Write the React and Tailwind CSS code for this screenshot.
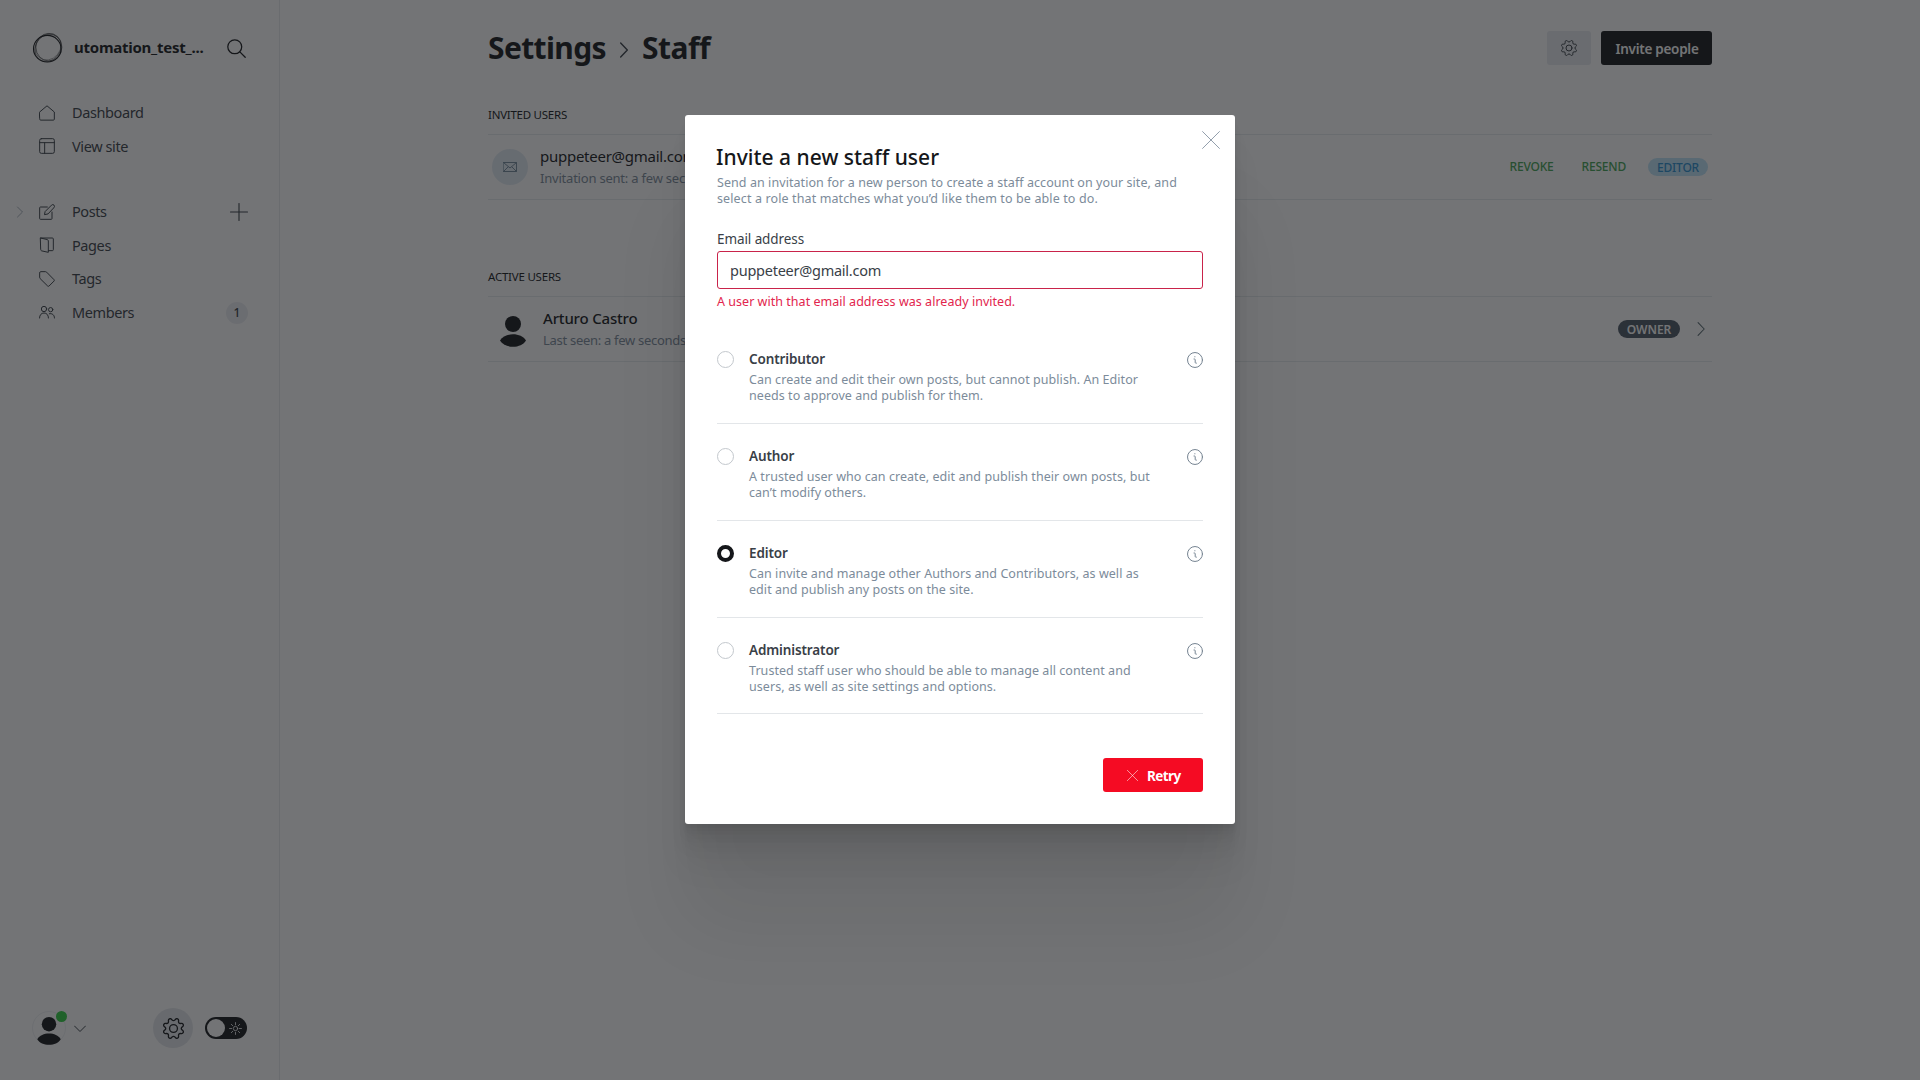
const Svg = ({ className = "", sw = 1.5, box = "0 0 24 24", children }) => (
  <svg
    viewBox={box}
    className={`shrink-0 ${className}`}
    fill="none"
    stroke="currentColor"
    strokeWidth={sw}
    strokeLinecap="round"
    strokeLinejoin="round"
  >
    {children}
  </svg>
);

const Gear = ({ className, sw }) => (
  <Svg className={className} sw={sw}>
    <path d="M10.546 2.438a1.957 1.957 0 0 0 2.908 0L14.4 1.4a1.959 1.959 0 0 1 3.41 1.413l-.071 1.4A1.958 1.958 0 0 0 19.79 6.27l1.4-.071A1.959 1.959 0 0 1 22.6 9.606l-1.04.94a1.962 1.962 0 0 0 0 2.909l1.04.944a1.958 1.958 0 0 1-1.413 3.406l-1.4-.071a1.958 1.958 0 0 0-2.056 2.056l.071 1.4A1.959 1.959 0 0 1 14.4 22.6l-.941-1.041a1.959 1.959 0 0 0-2.908 0L9.606 22.6A1.959 1.959 0 0 1 6.2 21.192l.072-1.4a1.958 1.958 0 0 0-2.057-2.056l-1.4.071A1.958 1.958 0 0 1 1.4 14.4l1.041-.944a1.962 1.962 0 0 0 0-2.909L1.4 9.606A1.959 1.959 0 0 1 2.817 6.2l1.4.071A1.958 1.958 0 0 0 6.27 4.214L6.2 2.813A1.959 1.959 0 0 1 9.606 1.4Z" />
    <circle cx="12" cy="12" r="4.5" />
  </Svg>
);

const Cross = ({ className, sw }) => (
  <Svg className={className} sw={sw}>
    <path d="M.75 23.25l22.5-22.5M23.25 23.25L.75.75" />
  </Svg>
);

const icons = {
  Dashboard: <path d="M1 10.5 12 1.2l11 9.3v10.7a1.5 1.5 0 0 1-1.5 1.5h-19A1.5 1.5 0 0 1 1 21.2z" />,
  "View site": (
    <>
      <rect x="1" y="1" width="22" height="22" rx="2.5" />
      <path d="M1 7h22M8.5 7v16" />
    </>
  ),
  Posts: (
    <>
      <path d="M12.5 4.5H2.2A1.2 1.2 0 0 0 1 5.7v16.1A1.2 1.2 0 0 0 2.2 23h16.1a1.2 1.2 0 0 0 1.2-1.2V12" />
      <path d="m13 15-4.8 1L9.2 11.3 18.8 1.7a2.6 2.6 0 0 1 3.7 3.7z" />
    </>
  ),
  Pages: (
    <>
      <path d="M2.5 1.5 12.500 3.900a2 2 0 0 1 1.500 1.900V23L4 20.800a2 2 0 0 1-1.500-1.900z" />
      <path d="M2.500 1.500H20a1.500 1.500 0 0 1 1.500 1.500v16a1.500 1.500 0 0 1-1.500 1.500h-6" />
    </>
  ),
  Tags: <path d="M1 2.500A1.500 1.500 0 0 1 2.500 1h7.200a2.500 2.500 0 0 1 1.700.7L22.500 13a1.500 1.500 0 0 1 0 2.100l-7.400 7.400a1.500 1.500 0 0 1-2.100 0L1.700 11.400A2.500 2.500 0 0 1 1 9.700z" />,
  Members: (
    <>
      <circle cx="7.500" cy="7.500" r="4" />
      <path d="M.8 21c0-4.500 2.700-7.500 6.700-7.500s6.700 3 6.700 7.500" />
      <circle cx="17.500" cy="8.500" r="3.200" />
      <path d="M15.500 14.600c4.200-1 7.700 1.600 7.700 6.400" />
    </>
  ),
};

const NavItem = ({ name, children }) => (
  <div className="flex h-[33.5px] items-center">
    <Svg className="ml-[39px] size-4 text-[#394047]">{icons[name]}</Svg>
    <span className="ml-[17px] flex-1 pt-px text-[14.5px] font-[370] tracking-[-0.4px] text-[#394047]">{name}</span>
    {children}
  </div>
);

const Person = ({ className }) => (
  <svg viewBox="0 0 26 31" className={`shrink-0 ${className}`} fill="#15171a">
    <circle cx="13" cy="8" r="8" />
    <path d="M0 24.500c2.500-4 7.500-6.200 13-6.200s10.500 2.200 13 6.200c-2.500 4-7.500 6.300-13 6.300S2.500 28.500 0 24.500z" />
  </svg>
);

const Logo = () => (
  <svg viewBox="0 0 32 32" className="ml-8 size-8 shrink-0" fill="none" stroke="#15171a">
    <ellipse cx="15.300" cy="16.700" rx="13.800" ry="13.300" strokeWidth="1.100" />
    <ellipse cx="16.900" cy="15.200" rx="13" ry="13.800" strokeWidth=".8" opacity=".65" />
    <ellipse cx="16" cy="16" rx="12.400" ry="14.400" strokeWidth=".8" opacity=".55" transform="rotate(40 16 16)" />
    <ellipse cx="17" cy="15.300" rx="14" ry="12.200" strokeWidth=".7" opacity=".5" transform="rotate(-50 16 16)" />
  </svg>
);

const Sidebar = () => (
  <aside className="flex w-[280px] shrink-0 flex-col border-r border-[#e8ebee]">
    <div className="mt-8 flex h-8 items-center">
      <Logo />
      <span className="ml-[10px] w-[153px] pb-px text-[15px] font-bold tracking-[-0.25px] text-[#15171a]">utomation_test_...</span>
      <Svg className="size-[19px] text-[#15171a]" sw={1.6}>
        <circle cx="9.800" cy="9.800" r="8.800" />
        <path d="m16.200 16.200 6.800 6.800" />
      </Svg>
    </div>
    <nav className="mt-8">
      <NavItem name="Dashboard" />
      <NavItem name="View site" />
    </nav>
    <nav className="relative mt-8">
      <Svg className="absolute top-[11px] left-[14px] size-3 text-[#8e9aa6]" sw={1.6}>
        <path d="m7 2 10 10L7 22" />
      </Svg>
      <NavItem name="Posts">
        <Svg className="mr-[31px] size-[18px] text-[#394047]" sw={1.5}>
          <path d="M12 .7v22.600M.7 12h22.600" />
        </Svg>
      </NavItem>
      <NavItem name="Pages" />
      <NavItem name="Tags" />
      <NavItem name="Members">
        <span className="mt-px mr-[31px] flex size-[22px] items-center justify-center rounded-full bg-[#eceef2] text-[12px] font-medium text-[#394047]">1</span>
      </NavItem>
    </nav>
    <div className="mt-auto mb-8 flex h-10 items-center">
      <div className="relative ml-8 flex size-[34px] items-end justify-center rounded-full border border-[#eff1f4]">
        <Person className="-mb-px h-[28px] w-[24px]" />
        <i className="absolute -top-px -right-[2px] size-[11px] rounded-full bg-[#30cf43]" />
      </div>
      <Svg className="mt-px ml-2 size-3 text-[#394047]" sw={2}>
        <path d="m1 6 11 11L23 6" />
      </Svg>
      <span className="ml-[67px] flex size-10 items-center justify-center rounded-full bg-[#e4e7eb]">
        <Gear className="size-[21px] text-[#15171a]" sw={1.5} />
      </span>
      <span className="ml-3 flex h-[22px] w-[42px] items-center rounded-full bg-[#15171a] pl-[2px]">
        <i className="size-[18px] rounded-full bg-white" />
        <Svg className="ml-[4px] size-[13px] text-white" sw={1.5}>
          <circle cx="12" cy="12" r="4" />
          <path d="M12 1v4M12 19v4M1 12h4M19 12h4M4.200 4.200 7 7M17 17l2.800 2.800M4.200 19.800 7 17M17 7l2.800-2.800" />
        </Svg>
      </span>
    </div>
  </aside>
);

const Row = ({ children }) => (
  <div className="flex h-[66px] items-center border-y border-[#e6eaed]">{children}</div>
);

const Main = () => (
  <main className="ml-[208px] w-[1224px]">
    <header className="mt-[31px] flex h-[34px] items-center text-[30px] font-bold text-[#15171a]">
      <span className="pb-[2px] leading-[31px] tracking-[-0.62px]">Settings</span>
      <Svg className="mt-[3px] ml-[10px] size-4 text-[#394047]" sw={2.1}>
        <path d="M7 1.500 17 12 7 22.500" />
      </Svg>
      <span className="ml-[10px] pb-[2px] leading-[31px] tracking-[-0.55px]">Staff</span>
      <span className="ml-auto flex h-[34px] w-11 items-center justify-center rounded-[3px] bg-[#e8ebef]">
        <Gear className="size-4 text-[#394047]" sw={1.5} />
      </span>
      <span className="ml-[10px] flex h-[34px] w-[111px] items-center justify-center rounded-[3px] bg-[#15171a] pt-[2px] pl-px text-[13.5px] font-semibold tracking-[-0.27px] text-white">Invite people</span>
    </header>
    <section>
      <h2 className="mt-[41px] h-7 text-[11.5px] leading-[17px] tracking-[-0.25px] text-[#15171a]">INVITED USERS</h2>
      <Row>
        <span className="ml-1 flex size-9 items-center justify-center rounded-full bg-[#e2ebf3]">
          <Svg className="h-[10px] w-[14px] text-[#738a9c]" sw={1} box="0 0 14 10">
            <path d="M.5.5h13v9H.5zM.5.5 7 6l6.500-5.500M.5 9.500 5 5M13.500 9.500 9 5" />
          </Svg>
        </span>
        <div className="ml-3 flex-1">
          <p className="text-[15px] leading-[22px] font-[430] tracking-[-0.26px] text-[#15171a]">puppeteer@gmail.com</p>
          <p className="pt-px text-[13px] leading-[21px] tracking-[-0.21px] text-[#7c8b9a]">Invitation sent: a few seconds ago</p>
        </div>
        <div className="mr-1 flex items-center text-[12px] font-medium tracking-[-0.2px] text-[#43a453]">
          <span>REVOKE</span>
          <span className="ml-[28px]">RESEND</span>
          <span className="ml-[22px] flex h-[18px] w-[60px] items-center justify-center rounded-full bg-[#bfe4f7] pt-px text-[#2a8fd0]">EDITOR</span>
        </div>
      </Row>
    </section>
    <section>
      <h2 className="mt-[68px] h-7 text-[11.5px] leading-[17px] tracking-[-0.22px] text-[#15171a]">ACTIVE USERS</h2>
      <Row>
        <Person className="mt-[5px] ml-3 h-[31px] w-[26px]" />
        <div className="ml-[17px] flex-1">
          <p className="text-[15px] leading-[22px] font-medium tracking-[-0.18px] text-[#15171a]">Arturo Castro</p>
          <p className="pt-px text-[13px] leading-[21px] tracking-[-0.29px] text-[#7c8b9a]">Last seen: a few seconds ago</p>
        </div>
        <span className="flex h-[18px] w-[62px] items-center justify-center rounded-full bg-[#4c5764] pt-px text-[12px] font-semibold text-white">OWNER</span>
        <Svg className="mr-1 ml-[14px] size-[14px] text-[#54666d]" sw={1.8}>
          <path d="M7 1 17.500 12 7 23" />
        </Svg>
      </Row>
    </section>
  </main>
);

const roles = [
  { name: "Contributor", text: ["Can create and edit their own posts, but cannot publish. An Editor", "needs to approve and publish for them."] },
  { name: "Author", text: ["A trusted user who can create, edit and publish their own posts, but", "can’t modify others."] },
  { name: "Editor", text: ["Can invite and manage other Authors and Contributors, as well as", "edit and publish any posts on the site."], selected: true },
  { name: "Administrator", text: ["Trusted staff user who should be able to manage all content and", "users, as well as site settings and options."] },
];

const Role = ({ name, text, selected }) => (
  <div className="flex h-[97px] border-b border-[#e3e6e9] pt-[22px] last:h-24">
    <i className={`mt-[2px] size-[17px] shrink-0 rounded-full ${selected ? "border-[4.5px] border-[#15171a]" : "border border-[#c3c8cd]"}`} />
    <div className="ml-[15px] flex-1">
      <p className="text-[13.5px] leading-5 font-semibold tracking-[-0.13px] text-[#394047]">{name}</p>
      <p className="mt-[3px] text-[12.5px] leading-4 tracking-[0.055px] whitespace-nowrap text-[#7c8b9a]">
        {text[0]}
        <br />
        {text[1]}
      </p>
    </div>
    <Svg className="mt-[3px] size-4 text-[#758391]" sw={1.5}>
      <circle cx="12" cy="12" r="11.200" />
      <path d="M10.500 10.500h.8a1 1 0 0 1 1 1v4.200a1 1 0 0 0 1 1h.8M11.800 7v.3" />
    </Svg>
  </div>
);

const Modal = () => (
  <div className="relative flex h-[709px] w-[550px] flex-col rounded-[3px] bg-white px-8 pt-[27px] shadow-[0_2.8px_2.2px_rgba(0,0,0,0.02),0_6.7px_5.3px_rgba(0,0,0,0.028),0_12.5px_10px_rgba(0,0,0,0.035),0_22.3px_17.9px_rgba(0,0,0,0.042),0_41.8px_33.4px_rgba(0,0,0,0.05),0_100px_80px_rgba(0,0,0,0.07)]">
    <Cross className="absolute top-4 right-[15px] size-[18px] text-[#7c8b9a]" sw={1.1} />
    <h1 className="-ml-px pt-px text-[21px] leading-7 font-medium tracking-[0.02px] text-[#15171a]">Invite a new staff user</h1>
    <p className="mt-1 text-[12.5px] leading-4 tracking-[0.07px] whitespace-nowrap text-[#7c8b9a]">
      Send an invitation for a new person to create a staff account on your site, and
      <br />
      <span className="tracking-[0.12px]">select a role that matches what you’d like them to be able to do.</span>
    </p>
    <label className="mt-[22px] text-[13.5px] leading-5 tracking-[-0.09px] text-[#394047]">Email address</label>
    <div className="mt-0.5 flex h-[38px] items-center rounded-[3px] border border-[#c9234a] pt-px pl-3 text-[14.5px] tracking-[-0.25px] text-[#394047]">puppeteer@gmail.com</div>
    <p className="mt-[5px] text-[12.5px] leading-4 tracking-[0.03px] text-[#e2254d]">A user with that email address was already invited.</p>
    <div className="mt-[17px]">
      {roles.map((r) => (
        <Role key={r.name} {...r} />
      ))}
    </div>
    <button className="mt-11 flex h-[34px] w-[100px] items-center self-end rounded-[3px] bg-[#f50b23] pl-6 text-[13.5px] font-bold tracking-[-0.6px] text-white">
      <Cross className="mr-[9px] size-[11px] text-white/80" sw={1.5} />
      <span className="pt-[2px]">Retry</span>
    </button>
  </div>
);

export default function App() {
  return (
    <div className="relative h-[1080px] w-[1920px] overflow-hidden bg-white font-['Noto_Sans',sans-serif]">
      <div className="flex h-full">
        <Sidebar />
        <Main />
      </div>
      <div className="absolute inset-0 flex items-start justify-center bg-[#15171a]/60 pt-[115px]">
        <Modal />
      </div>
    </div>
  );
}
